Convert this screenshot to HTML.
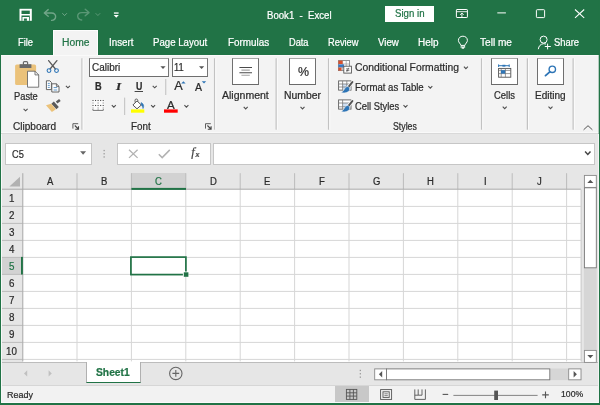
<!DOCTYPE html>
<html lang="en"><head><meta charset="utf-8"><title>Book1 - Excel</title>
<style>
html,body{margin:0;padding:0;background:#fff;}
body{width:600px;height:405px;overflow:hidden;font-family:"Liberation Sans",sans-serif;}
#app{position:relative;width:600px;height:405px;overflow:hidden;background:#e6e6e6;}
#app div,#app svg,#app span{position:absolute;box-sizing:border-box;}
.t{white-space:pre;line-height:1;transform-origin:0 0;display:block;-webkit-text-stroke:0.22px currentColor;}
#titlebar{left:0;top:0;width:600px;height:55px;background:#217346;}
#signin{left:385px;top:6.2px;width:49.2px;height:15.5px;background:#fff;}
#hometab{left:53px;top:30px;width:45px;height:25.5px;background:#f3f3f3;border:1px solid #fdfdfd;border-bottom:none;box-shadow:0 0 1px #17613a;}
#ribbon{left:0;top:55px;width:600px;height:79px;background:#f3f3f3;border-top:1px solid #fafafa;border-bottom:1px solid #d9d9d9;box-shadow:inset 0 -1px 0 #f9f9f9;}
#fbar{left:0;top:134px;width:600px;height:39px;background:#e6e6e6;}
.box{background:#fff;border:1px solid #c6c6c6;}
.box.big{border-color:#a8a8a8 #707070 #6a6a6a #707070;}
#fontname,#fontsize{border-color:#a0a0a0 #767676 #6e6e6e #6e6e6e;}
.sep{width:1px;background:#c8c8c8;}
#grid{left:22.6px;top:189.4px;width:558.2px;height:172.3px;background:#fff;}
#colhdr{left:0;top:173px;width:581px;height:16.4px;background:#e6e6e6;}
#rowhdr{left:0;top:189.4px;width:22.6px;height:172.3px;background:#e6e6e6;}
#colsel{left:131.4px;top:173px;width:54.4px;height:16.6px;background:#d2d2d2;}
#rowsel{left:0;top:257.4px;width:22.8px;height:17px;background:#d2d2d2;}
#tabbar{left:0;top:362px;width:600px;height:24px;background:#e6e6e6;border-top:1px solid #bcbcbc;border-bottom:1px solid #d6d6d6;}
#sheettab{left:85.7px;top:361.6px;width:55.4px;height:21.2px;background:#fff;border-left:1px solid #b0b0b0;border-right:1px solid #b0b0b0;border-bottom:1.9px solid #217346;}
#status{left:0;top:386px;width:600px;height:19px;background:#f2f2f2;}
#viewsel{left:335.2px;top:386px;width:33.8px;height:17.2px;background:#c8c8c8;}
#frame{left:0;top:0;width:600px;height:405px;border-left:1px solid #217346;border-right:1.25px solid #217346;border-bottom:2px solid #217346;pointer-events:none;}
#inner{left:1px;top:134px;width:597.6px;height:269px;border-left:1px solid #f8f8f8;border-right:1px solid #f4f4f4;border-bottom:1px solid #fafafa;pointer-events:none;}
#labels{left:0;top:0;width:600px;height:405px;will-change:transform;}

</style></head>
<body>
<div id="app">
<div id="titlebar"></div>
<div id="signin"></div>
<div id="hometab"></div>
<div id="ribbon"></div>
<div id="fbar"></div>

<!-- ribbon boxes -->
<div class="box" id="fontname" style="left:88.8px;top:58.2px;width:80.6px;height:18.8px;"></div>
<div class="box" id="fontsize" style="left:172px;top:58.2px;width:36.2px;height:18.8px;"></div>
<div class="box big" style="left:232px;top:58.2px;width:27.3px;height:26.5px;"></div>
<div class="box big" style="left:289px;top:58.2px;width:27.3px;height:26.5px;"></div>
<div class="box big" style="left:491.2px;top:58.2px;width:27.3px;height:26.5px;"></div>
<div class="box big" style="left:536.8px;top:58.2px;width:27.6px;height:26.5px;"></div>

<!-- formula bar -->
<div class="box" id="namebox" style="left:5px;top:143px;width:87px;height:22px;"></div>
<div class="box" id="fxbtns" style="left:117px;top:143px;width:94px;height:22px;"></div>
<div class="box" id="finput" style="left:213px;top:143px;width:382px;height:22px;"></div>

<!-- grid -->
<div id="grid"></div>
<div id="colhdr"></div>
<div id="rowhdr"></div>
<div id="colsel"></div>
<div id="rowsel"></div>

<!-- bottom -->
<div id="tabbar"></div>
<div id="sheettab"></div>
<div id="status"></div>
<div id="viewsel"></div>

<svg id="ov" width="600" height="405" viewBox="0 0 600 405" style="left:0;top:0;">
<rect x="22.6" y="205.90" width="558.4" height="1" fill="#d6d6d6"/>
<rect x="1" y="205.90" width="21.6" height="1" fill="#bcbcbc"/>
<rect x="22.6" y="222.90" width="558.4" height="1" fill="#d6d6d6"/>
<rect x="1" y="222.90" width="21.6" height="1" fill="#bcbcbc"/>
<rect x="22.6" y="239.90" width="558.4" height="1" fill="#d6d6d6"/>
<rect x="1" y="239.90" width="21.6" height="1" fill="#bcbcbc"/>
<rect x="22.6" y="256.90" width="558.4" height="1" fill="#d6d6d6"/>
<rect x="1" y="256.90" width="21.6" height="1" fill="#bcbcbc"/>
<rect x="22.6" y="273.90" width="558.4" height="1" fill="#d6d6d6"/>
<rect x="1" y="273.90" width="21.6" height="1" fill="#bcbcbc"/>
<rect x="22.6" y="290.90" width="558.4" height="1" fill="#d6d6d6"/>
<rect x="1" y="290.90" width="21.6" height="1" fill="#bcbcbc"/>
<rect x="22.6" y="307.90" width="558.4" height="1" fill="#d6d6d6"/>
<rect x="1" y="307.90" width="21.6" height="1" fill="#bcbcbc"/>
<rect x="22.6" y="324.90" width="558.4" height="1" fill="#d6d6d6"/>
<rect x="1" y="324.90" width="21.6" height="1" fill="#bcbcbc"/>
<rect x="22.6" y="341.90" width="558.4" height="1" fill="#d6d6d6"/>
<rect x="1" y="341.90" width="21.6" height="1" fill="#bcbcbc"/>
<rect x="22.6" y="358.90" width="558.4" height="1" fill="#d6d6d6"/>
<rect x="1" y="358.90" width="21.6" height="1" fill="#bcbcbc"/>
<rect x="76.50" y="189.4" width="1" height="172" fill="#d6d6d6"/>
<rect x="76.50" y="173.2" width="1" height="16" fill="#bcbcbc"/>
<rect x="130.90" y="189.4" width="1" height="172" fill="#d6d6d6"/>
<rect x="130.90" y="173.2" width="1" height="16" fill="#bcbcbc"/>
<rect x="185.30" y="189.4" width="1" height="172" fill="#d6d6d6"/>
<rect x="185.30" y="173.2" width="1" height="16" fill="#bcbcbc"/>
<rect x="239.70" y="189.4" width="1" height="172" fill="#d6d6d6"/>
<rect x="239.70" y="173.2" width="1" height="16" fill="#bcbcbc"/>
<rect x="294.10" y="189.4" width="1" height="172" fill="#d6d6d6"/>
<rect x="294.10" y="173.2" width="1" height="16" fill="#bcbcbc"/>
<rect x="348.50" y="189.4" width="1" height="172" fill="#d6d6d6"/>
<rect x="348.50" y="173.2" width="1" height="16" fill="#bcbcbc"/>
<rect x="402.90" y="189.4" width="1" height="172" fill="#d6d6d6"/>
<rect x="402.90" y="173.2" width="1" height="16" fill="#bcbcbc"/>
<rect x="457.30" y="189.4" width="1" height="172" fill="#d6d6d6"/>
<rect x="457.30" y="173.2" width="1" height="16" fill="#bcbcbc"/>
<rect x="511.70" y="189.4" width="1" height="172" fill="#d6d6d6"/>
<rect x="511.70" y="173.2" width="1" height="16" fill="#bcbcbc"/>
<rect x="566.10" y="189.4" width="1" height="172" fill="#d6d6d6"/>
<rect x="566.10" y="173.2" width="1" height="16" fill="#bcbcbc"/>
<rect x="22.3" y="173.2" width="1" height="188.2" fill="#a8a8a8"/>
<rect x="1" y="188.7" width="580" height="1" fill="#a8a8a8"/>
<rect x="580.5" y="189.4" width="1.4" height="172" fill="#d2d2d2"/>
<rect x="131.4" y="187.9" width="54.6" height="2" fill="#217346"/>
<rect x="21" y="256.9" width="1.9" height="17.6" fill="#217346"/>
<defs>
<path id="chev" d="M-2,-1 L0,1 L2,-1" fill="none" stroke="#505050" stroke-width="1.1" stroke-linecap="butt" stroke-linejoin="miter"/>
<g id="launcher" fill="none" stroke="#444" stroke-width="0.95">
<path d="M0.5,5.4 L0.5,0.5 L5.8,0.5" stroke="#555"/>
<path d="M2.4,2.3 L5.9,5.8 M6.1,3 L6.1,6 L2.8,6" stroke-width="1.1"/>
</g>
</defs>

<!-- ribbon separators -->
<g id="seps">
<rect x="81.35" y="58.3" width="1.3" height="71.4" fill="#c2c2c2"/><rect x="82.65" y="58.3" width="1" height="71.4" fill="#fbfbfb"/>
<rect x="213.95" y="58.3" width="1.3" height="71.4" fill="#c2c2c2"/><rect x="215.25" y="58.3" width="1" height="71.4" fill="#fbfbfb"/>
<rect x="275.55" y="58.3" width="1.3" height="71.4" fill="#c2c2c2"/><rect x="276.85" y="58.3" width="1" height="71.4" fill="#fbfbfb"/>
<rect x="327.95" y="58.3" width="1.3" height="71.4" fill="#c2c2c2"/><rect x="329.25" y="58.3" width="1" height="71.4" fill="#fbfbfb"/>
<rect x="480.95" y="58.3" width="1.3" height="71.4" fill="#c2c2c2"/><rect x="482.25" y="58.3" width="1" height="71.4" fill="#fbfbfb"/>
<rect x="526.75" y="58.3" width="1.3" height="71.4" fill="#c2c2c2"/><rect x="528.05" y="58.3" width="1" height="71.4" fill="#fbfbfb"/>
<rect x="572.55" y="58.3" width="1.3" height="71.4" fill="#c2c2c2"/><rect x="573.85" y="58.3" width="1" height="71.4" fill="#fbfbfb"/>
<rect x="165.1" y="79" width="1.2" height="16" fill="#c8c8c8"/>
<rect x="124" y="97.6" width="1.2" height="17.4" fill="#c8c8c8"/>
</g>

<!-- title bar: quick access toolbar -->
<g id="qat">
<rect x="19.5" y="8.8" width="12.3" height="12" fill="#fff"/>
<rect x="21.5" y="10.6" width="8.3" height="3.4" fill="#217346"/>
<rect x="21.5" y="15.5" width="8.3" height="5.3" fill="#217346"/>
<rect x="22.4" y="17" width="6.6" height="3.8" fill="#fff"/>
<rect x="23.9" y="18.5" width="3" height="2.3" fill="#217346"/>
<g fill="none" stroke="#ffffff" stroke-opacity="0.36" stroke-width="1.4" stroke-linecap="round" stroke-linejoin="round">
<path d="M48.2,9.6 L44.3,13 L48.2,16.2 M44.6,13 L51.5,13 C54.5,13 55.8,15 55.6,16.8 C55.4,18.8 53.8,20.2 51.6,20.4"/>
<path d="M62.6,13.5 L64.6,15.5 L66.6,13.5" stroke-width="1"/>
</g>
<g fill="none" stroke="#ffffff" stroke-opacity="0.26" stroke-width="1.4" stroke-linecap="round" stroke-linejoin="round">
<path d="M85.2,9.2 L89,12.6 L85.2,15.8 M88.6,12.6 L81.8,12.6 C78.8,12.6 77.5,14.6 77.7,16.4 C77.9,18.4 79.5,19.8 81.7,20"/>
<path d="M95.9,13.5 L97.9,15.5 L99.9,13.5" stroke-width="1"/>
</g>
<rect x="113.9" y="12.4" width="4.7" height="1.3" fill="#fff"/>
<path d="M113.7,14.9 L118.8,14.9 L116.25,17.7 Z" fill="#fff"/>
</g>

<!-- title bar: window controls -->
<g id="winctl" fill="none" stroke="#fff" stroke-width="1">
<rect x="456.4" y="9.5" width="11" height="8" rx="0.6" fill="#1c663c"/>
<path d="M456.4,11.7 L467.4,11.7" stroke-width="0.9"/>
<path d="M461.9,17.4 L461.9,13.2 M460.1,14.9 L461.9,13 L463.7,14.9" stroke-width="0.9"/>
<path d="M497.3,12.9 L505.9,12.9"/>
<rect x="536.4" y="9.7" width="8.2" height="7.9" rx="0.8"/>
<path d="M575,9.5 L584.2,17.8 M584.2,9.5 L575,17.8" stroke-width="1.05"/>
</g>

<!-- tell me bulb + share -->
<g id="tellme" fill="none" stroke="#fff" stroke-width="1">
<path d="M460.9,45.4 C460.6,43.6 458.4,42.6 458.4,40.4 C458.4,37.9 460.3,36.2 462.9,36.2 C465.5,36.2 467.4,37.9 467.4,40.4 C467.4,42.6 465.2,43.6 464.9,45.4 Z"/>
<path d="M461.2,45.6 L461.2,47.6 C461.2,48.6 464.6,48.6 464.6,47.6 L464.6,45.6" stroke-width="0.9"/>
<path d="M461.8,47.2 L464,47.2" stroke-width="1.4"/>
</g>
<g id="share" fill="none" stroke="#fff" stroke-width="1">
<circle cx="543.6" cy="39.6" r="3.5"/>
<path d="M538.3,49.2 C538.6,46 540.8,43.9 543.6,43.7 L546,44"/>
<path d="M547.6,43.6 L547.6,49.4 M544.8,46.5 L550.8,46.5"/>
</g>

<!-- Clipboard group -->
<g id="paste">
<rect x="15.1" y="64.4" width="21" height="20.6" rx="1.6" fill="#ebc27a"/>
<rect x="23.4" y="61.6" width="4.2" height="3.4" rx="1" fill="none" stroke="#6a6a6a" stroke-width="1.2"/>
<rect x="19.6" y="64.2" width="11.8" height="3.8" fill="#6a6a6a"/>
<path d="M27.5,71.2 L35,71.2 L38.7,74.9 L38.7,87.2 L27.5,87.2 Z" fill="#fff" stroke="#6a6a6a" stroke-width="0.9"/>
<path d="M35,71.2 L35,74.9 L38.7,74.9" fill="none" stroke="#6a6a6a" stroke-width="0.9"/>
</g>
<use href="#chev" x="25.6" y="109.8"/>
<g id="cut">
<path d="M48.6,60.6 L55.4,69 M56.9,60.6 L50.1,69" stroke="#5a5a5a" stroke-width="1.3" fill="none" stroke-linecap="round"/>
<circle cx="49" cy="70.6" r="1.9" fill="none" stroke="#2e75b6" stroke-width="1.1"/>
<circle cx="56.5" cy="70.6" r="1.9" fill="none" stroke="#2e75b6" stroke-width="1.1"/>
</g>
<g id="copy">
<path d="M46.4,80.8 L49.8,80.8 L51.4,82.4 L51.4,89.6 L46.4,89.6 Z" fill="#fff" stroke="#555" stroke-width="0.9"/>
<path d="M51.8,83.8 L56.4,83.8 L59,86.4 L59,92 L51.8,92 Z" fill="#fff" stroke="#555" stroke-width="0.9"/>
<path d="M56.4,83.8 L56.4,86.4 L59,86.4" fill="none" stroke="#555" stroke-width="0.8"/>
<path d="M47.8,83.4 L49.8,83.4 M47.8,85.4 L49.8,85.4 M47.8,87.4 L49.8,87.4 M53.6,87.6 L57.2,87.6 M53.6,90 L57.2,90" stroke="#2e75b6" stroke-width="0.75"/>
</g>
<use href="#chev" x="67.9" y="86.8"/>
<g id="painter">
<path d="M56.6,102.5 L59.9,99.9" stroke="#5a5a5a" stroke-width="2.5" stroke-linecap="butt"/>
<path d="M52.6,102.6 L57.6,108.2" stroke="#5a5a5a" stroke-width="3.3" stroke-linecap="butt"/>
<path d="M51.2,103.8 L46,105.3 L51.9,112 L55.9,109.2 Z" fill="#ebc27a"/>
</g>
<use href="#launcher" x="72.4" y="123.2"/>

<!-- Font group -->
<path d="M160.4,66.2 L165.6,66.2 L163,68.9 Z" fill="#555"/>
<path d="M199,66.2 L204.2,66.2 L201.6,68.9 Z" fill="#555"/>
<rect x="134.6" y="91.1" width="8.4" height="0.9" fill="#333"/>
<use href="#chev" x="154.7" y="86.8"/>
<path d="M181.2,83.6 L183.4,81.3 L185.6,83.6 Z" fill="#2e75b6"/>
<path d="M201.8,81.3 L206.2,81.3 L204,83.6 Z" fill="#2e75b6"/>
<g id="borders">
<rect x="92.2" y="99.5" width="12" height="12" fill="#fcfcfc"/>
<g fill="#4a4a4a"><rect x="92.45" y="99.95" width="1.1" height="1.1"/><rect x="95.00" y="99.95" width="1.1" height="1.1"/><rect x="97.55" y="99.95" width="1.1" height="1.1"/><rect x="100.10" y="99.95" width="1.1" height="1.1"/><rect x="102.65" y="99.95" width="1.1" height="1.1"/><rect x="92.45" y="104.95" width="1.1" height="1.1"/><rect x="95.00" y="104.95" width="1.1" height="1.1"/><rect x="97.55" y="104.95" width="1.1" height="1.1"/><rect x="100.10" y="104.95" width="1.1" height="1.1"/><rect x="102.65" y="104.95" width="1.1" height="1.1"/><rect x="92.45" y="102.45" width="1.1" height="1.1" fill-opacity="0.6"/><rect x="97.55" y="102.45" width="1.1" height="1.1" fill-opacity="0.6"/><rect x="102.65" y="102.45" width="1.1" height="1.1" fill-opacity="0.6"/><rect x="92.45" y="107.45" width="1.1" height="1.1" fill-opacity="0.6"/><rect x="97.55" y="107.45" width="1.1" height="1.1" fill-opacity="0.6"/><rect x="102.65" y="107.45" width="1.1" height="1.1" fill-opacity="0.6"/></g>
<path d="M92.9,109 L92.9,110.4 L103.3,110.4 L103.3,109 M98.1,109.4 L98.1,110.4" stroke="#777" stroke-width="1" fill="none"/>
</g>
<use href="#chev" x="113.8" y="106.2"/>
<g id="fill">
<path d="M132.9,105 L137,100.9 L141.3,105 L137,108.8 Z" fill="#fff" stroke="#555" stroke-width="1" stroke-linejoin="round"/>
<path d="M135.2,102.6 L135,100.2 C135,98.6 137.6,98.6 137.8,100.2 L137.9,101.6" fill="none" stroke="#555" stroke-width="0.9"/>
<path d="M141.2,102.6 C143.4,103.6 144.4,106 143,108.6 C142.8,106.8 142.2,105.8 141.2,105 Z" fill="#2e75b6" stroke="#2e75b6" stroke-width="0.6"/>
<rect x="131" y="109.4" width="13.3" height="3.3" fill="#ffff00"/>
</g>
<use href="#chev" x="153.1" y="106.2"/>
<rect x="164" y="109.4" width="13.7" height="3.3" fill="#ff0000"/>
<use href="#chev" x="186.4" y="106.2"/>
<use href="#launcher" x="205" y="123.2"/>

<!-- Alignment / Number -->
<g id="alignicon" stroke-width="1.1">
<path d="M239.4,67.5 L252,67.5 M239.4,72.7 L252,72.7" stroke="#4a4a4a"/>
<path d="M241.4,70.1 L249.8,70.1 M241.4,75.3 L249.8,75.3" stroke="#a4a4a4"/>
</g>
<use href="#chev" x="245.7" y="107.9"/>
<use href="#chev" x="302.5" y="107.9"/>

<!-- Styles group -->
<g id="condfmt">
<rect x="338.4" y="60.6" width="11.2" height="10" fill="#fff" stroke="#7a7a7a" stroke-width="0.8"/>
<path d="M342.6,60.6 L342.6,70.6 M346.2,60.6 L346.2,70.6 M338.4,64 L349.6,64 M338.4,67.4 L349.6,67.4" stroke="#9a9a9a" stroke-width="0.7" fill="none"/>
<rect x="338.4" y="60.6" width="4.2" height="3.4" fill="#d8502d"/>
<rect x="338.4" y="64.4" width="5.6" height="2.8" fill="#3b78c2"/>
<rect x="338.4" y="67.6" width="3.2" height="3" fill="#d8502d"/>
<rect x="343.8" y="66.2" width="7.6" height="6.9" fill="#fff" stroke="#555" stroke-width="0.9"/>
<path d="M346,68.9 L349.4,68.9 M346,70.6 L349.4,70.6 M348.6,67.8 L346.8,71.8" stroke="#444" stroke-width="0.7" fill="none"/>
</g>
<use href="#chev" x="465.9" y="67.6"/>
<g id="fmttable">
<rect x="338.6" y="80.9" width="12.4" height="9.2" fill="#fff" stroke="#5e5e5e" stroke-width="0.9"/>
<rect x="342.6" y="84" width="8" height="5.8" fill="#cfe0f3"/>
<path d="M342.6,80.9 L342.6,90.1 M346.8,80.9 L346.8,90.1 M338.6,84 L351,84 M338.6,87 L351,87" stroke="#7a7a7a" stroke-width="0.8" fill="none"/>
<path d="M352.6,81.8 L348.4,87" stroke="#f3f3f3" stroke-width="3.6" stroke-linecap="round"/>
<path d="M352.4,82 L348.8,86.6" stroke="#555" stroke-width="2" stroke-linecap="round"/>
<path d="M348.2,86.6 C350.2,87.6 350.2,90.2 348.4,91.6 C346.4,93.2 343.2,93 341,92.6 C343,91.8 343.6,90.4 344.6,88.8 C345.6,87.2 347,86.2 348.2,86.6 Z" fill="#2e75b6" stroke="#f3f3f3" stroke-width="0.5"/>
</g>
<use href="#chev" x="430.3" y="87.2"/>
<g id="cellstyles">
<rect x="338.6" y="99.9" width="12.4" height="9.2" fill="#fff" stroke="#5e5e5e" stroke-width="0.9"/>
<rect x="342.6" y="103" width="8" height="3.8" fill="#cfe0f3"/>
<path d="M342.6,99.9 L342.6,109.1 M338.6,103 L351,103 M338.6,106.8 L351,106.8" stroke="#7a7a7a" stroke-width="0.8" fill="none"/>
<path d="M352.6,100.8 L348.4,106" stroke="#f3f3f3" stroke-width="3.6" stroke-linecap="round"/>
<path d="M352.4,101 L348.8,105.6" stroke="#555" stroke-width="2" stroke-linecap="round"/>
<path d="M348.2,105.6 C350.2,106.6 350.2,109.2 348.4,110.6 C346.4,112.2 343.2,112 341,111.6 C343,110.8 343.6,109.4 344.6,107.8 C345.6,106.2 347,105.2 348.2,105.6 Z" fill="#2e75b6" stroke="#f3f3f3" stroke-width="0.5"/>
</g>
<use href="#chev" x="405.5" y="106.2"/>

<!-- Cells / Editing -->
<g id="cellsicon">
<path d="M498.6,64.4 L498.6,67 M509.2,64.4 L509.2,67 M498.6,65.7 L509.2,65.7" stroke="#2e75b6" stroke-width="1" fill="none"/>
<rect x="502.4" y="64.8" width="3" height="1.8" fill="#2e75b6"/>
<rect x="498.6" y="68.4" width="12.2" height="8.8" fill="#fff" stroke="#505050" stroke-width="0.9"/>
<path d="M501.2,68.4 L501.2,77.2 M505.4,68.4 L505.4,77.2 M498.6,70.4 L510.8,70.4 M498.6,73.6 L510.8,73.6" stroke="#707070" stroke-width="0.7" fill="none"/>
<rect x="501" y="70.2" width="4.2" height="3.4" fill="#2e75b6"/>
</g>
<use href="#chev" x="504.7" y="107.7"/>
<g id="findicon" fill="none" stroke="#2e75b6">
<circle cx="552.3" cy="69.3" r="3.2" stroke-width="1.4"/>
<path d="M549.8,71.9 L545.5,75.6" stroke-width="1.9" stroke-linecap="round"/>
</g>
<use href="#chev" x="550.5" y="107.7"/>
<path d="M583.6,129.8 L588,125.7 L592.4,129.8" fill="none" stroke="#555" stroke-width="1"/>

<!-- formula bar -->
<path d="M80.1,151.3 L86.1,151.3 L83.1,154.8 Z" fill="#666"/>
<g fill="#9a9a9a"><rect x="103.5" y="149.9" width="1.3" height="1.3"/><rect x="103.5" y="153.1" width="1.3" height="1.3"/><rect x="103.5" y="156.3" width="1.3" height="1.3"/></g>
<path d="M129,149.8 L137.6,157.9 M137.6,149.8 L129,157.9" stroke="#b2b2b2" stroke-width="1.3" fill="none"/>
<path d="M158.8,154.2 L162.2,157.6 L169.8,149.9" stroke="#b2b2b2" stroke-width="1.5" fill="none"/>
<path d="M585.1,151.5 L587.8,154.4 L590.5,151.5" fill="none" stroke="#444" stroke-width="1.5"/>

<!-- select all triangle -->
<path d="M20,176.8 L20,186.6 L9.4,186.6 Z" fill="#b2b2b2"/>

<!-- selected cell -->
<rect x="130.9" y="257.1" width="55" height="17.5" fill="none" stroke="#217346" stroke-width="1.7"/>
<rect x="182.9" y="271.5" width="5.6" height="5.4" fill="#fff"/>
<rect x="183.8" y="272.3" width="4.6" height="4.5" fill="#217346"/>

<!-- vertical scrollbar -->
<g id="vscroll">
<rect x="583.9" y="175.2" width="12.8" height="187.4" fill="#d6d6d6"/>
<rect x="584.4" y="175.4" width="11.9" height="12" fill="#fff" stroke="#8a8a8a" stroke-width="0.9"/>
<path d="M587.3,183 L590.35,179.7 L593.4,183 Z" fill="#555"/>
<rect x="584.4" y="187.8" width="11.9" height="80" fill="#fff" stroke="#777" stroke-width="0.9"/>
<rect x="584.4" y="350.4" width="11.9" height="12" fill="#fff" stroke="#8a8a8a" stroke-width="0.9"/>
<path d="M587.3,354.9 L593.4,354.9 L590.35,358.2 Z" fill="#555"/>
</g>

<!-- sheet nav + add -->
<path d="M27.2,370.2 L24,373.4 L27.2,376.6 Z" fill="#c0c0c0"/>
<path d="M48.6,370.2 L51.8,373.4 L48.6,376.6 Z" fill="#c0c0c0"/>
<g fill="none" stroke="#666" stroke-width="1.1">
<circle cx="175.8" cy="373.4" r="6.2"/>
<path d="M172.4,373.4 L179.2,373.4 M175.8,370 L175.8,376.8"/>
</g>

<!-- horizontal scrollbar -->
<g fill="#9a9a9a"><rect x="359.7" y="369.8" width="1.3" height="1.3"/><rect x="359.7" y="373.1" width="1.3" height="1.3"/><rect x="359.7" y="376.5" width="1.3" height="1.3"/></g>
<g id="hscroll">
<rect x="374.3" y="368.5" width="207" height="11.6" fill="#d6d6d6"/>
<rect x="374.7" y="368.9" width="11.8" height="10.9" fill="#fff" stroke="#8a8a8a" stroke-width="0.9"/>
<path d="M382.2,371 L378.9,374.3 L382.2,377.6 Z" fill="#555"/>
<rect x="386.5" y="368.9" width="163.3" height="10.9" fill="#fff" stroke="#777" stroke-width="0.9"/>
<rect x="568.7" y="368.9" width="12.3" height="10.9" fill="#fff" stroke="#8a8a8a" stroke-width="0.9"/>
<path d="M573.6,371 L576.9,374.3 L573.6,377.6 Z" fill="#555"/>
</g>

<!-- status bar view buttons -->
<g id="views" fill="none" stroke="#555" stroke-width="0.9">
<rect x="346.4" y="389.4" width="10.4" height="10"/>
<path d="M349.9,389.4 L349.9,399.4 M353.4,389.4 L353.4,399.4 M346.4,392.8 L356.8,392.8 M346.4,396.1 L356.8,396.1"/>
<rect x="380.6" y="389.6" width="11" height="9.8"/>
<rect x="383" y="391.8" width="6.2" height="5.6"/>
<path d="M384.4,393.8 L387.8,393.8 M384.4,395.6 L387.8,395.6" stroke-width="0.7"/>
<path d="M414.8,389.4 L414.8,399.4 L425.4,399.4 L425.4,389.4"/>
<path d="M418.2,389.4 L418.2,395.2 L422,395.2 L422,389.4 M414.8,395.2 L418.2,395.2"/>
</g>
<!-- zoom slider -->
<g id="zoom" stroke="#555" fill="none">
<path d="M442.6,394.4 L448.2,394.4" stroke-width="1.1"/>
<path d="M453.4,395.4 L537.6,395.4" stroke-width="0.9" stroke="#777"/>
<rect x="494.2" y="390.6" width="3.8" height="9.4" fill="#555" stroke="none"/>
<path d="M542.2,394.9 L548.8,394.9 M545.5,391.6 L545.5,398.2" stroke-width="1.1"/>
</g>

<rect id="rborder" x="598.7" y="0" width="1.3" height="405" fill="#217346"/>

</svg>
<div id="inner"></div>
<div id="frame"></div>

<div id="labels">
<span class="t" id="t0" style="left:267.30px;top:10.54px;font-size:10px;color:#ffffff;transform:scaleX(0.9604)">Book1  -  Excel</span>
<span class="t" id="t1" style="left:394.50px;top:9.28px;font-size:10.3px;color:#217346;transform:scaleX(0.9370)">Sign in</span>
<span class="t" id="t2" style="left:18.30px;top:37.53px;font-size:10px;color:#ffffff;transform:scaleX(0.9302)">File</span>
<span class="t" id="t3" style="left:61.70px;top:37.53px;font-size:10px;color:#217346;transform:scaleX(1.0304)">Home</span>
<span class="t" id="t4" style="left:108.80px;top:37.53px;font-size:10px;color:#ffffff;transform:scaleX(0.9794)">Insert</span>
<span class="t" id="t5" style="left:153.30px;top:37.53px;font-size:10px;color:#ffffff;transform:scaleX(0.9649)">Page Layout</span>
<span class="t" id="t6" style="left:228.00px;top:37.53px;font-size:10px;color:#ffffff;transform:scaleX(0.9883)">Formulas</span>
<span class="t" id="t7" style="left:288.50px;top:37.53px;font-size:10px;color:#ffffff;transform:scaleX(0.9231)">Data</span>
<span class="t" id="t8" style="left:327.80px;top:37.53px;font-size:10px;color:#ffffff;transform:scaleX(0.9300)">Review</span>
<span class="t" id="t9" style="left:377.50px;top:37.53px;font-size:10px;color:#ffffff;transform:scaleX(0.9674)">View</span>
<span class="t" id="t10" style="left:417.80px;top:37.53px;font-size:10px;color:#ffffff;transform:scaleX(0.9962)">Help</span>
<span class="t" id="t11" style="left:479.80px;top:37.53px;font-size:10px;color:#ffffff;transform:scaleX(1.0099)">Tell me</span>
<span class="t" id="t12" style="left:554.00px;top:37.53px;font-size:10px;color:#ffffff;transform:scaleX(0.9368)">Share</span>
<span class="t" id="t13" style="left:13.80px;top:91.53px;font-size:10px;color:#2b2b2b;transform:scaleX(0.9305)">Paste</span>
<span class="t" id="t14" style="left:13.00px;top:121.53px;font-size:10px;color:#2b2b2b;transform:scaleX(1.0044)">Clipboard</span>
<span class="t" id="t15" style="left:92.20px;top:62.53px;font-size:10px;color:#2b2b2b;transform:scaleX(0.9949)">Calibri</span>
<span class="t" id="t16" style="left:174.30px;top:62.53px;font-size:10px;color:#2b2b2b;transform:scaleX(0.9335)">11</span>
<span class="t" id="t17" style="left:94.67px;top:81.53px;font-size:10px;color:#2b2b2b;font-weight:bold;transform:scaleX(0.9200)">B</span>
<span class="t" id="t18" style="left:115.63px;top:80.69px;font-size:11px;color:#2b2b2b;font-weight:bold;font-style:italic;font-family:'Liberation Serif',serif;transform:scaleX(1.2000)">I</span>
<span class="t" id="t19" style="left:135.62px;top:81.53px;font-size:10px;color:#2b2b2b;font-weight:bold;transform:scaleX(0.8800)">U</span>
<span class="t" id="t20" style="left:174.37px;top:80.25px;font-size:12.7px;color:#2b2b2b;transform:scaleX(1.0000)">A</span>
<span class="t" id="t21" style="left:195.30px;top:82.53px;font-size:10px;color:#2b2b2b;transform:scaleX(1.0500)">A</span>
<span class="t" id="t22" style="left:167.24px;top:99.69px;font-size:11px;color:#2b2b2b;transform:scaleX(1.0500)">A</span>
<span class="t" id="t23" style="left:131.30px;top:121.53px;font-size:10px;color:#2b2b2b;transform:scaleX(0.9842)">Font</span>
<span class="t" id="t24" style="left:222.20px;top:90.53px;font-size:10px;color:#2b2b2b;transform:scaleX(1.0524)">Alignment</span>
<span class="t" id="t25" style="left:297.67px;top:64.57px;font-size:13.5px;color:#2b2b2b;transform:scaleX(0.9200)">%</span>
<span class="t" id="t26" style="left:284.20px;top:90.53px;font-size:10px;color:#2b2b2b;transform:scaleX(1.0400)">Number</span>
<span class="t" id="t27" style="left:355.00px;top:62.53px;font-size:10px;color:#2b2b2b;transform:scaleX(1.0337)">Conditional Formatting</span>
<span class="t" id="t28" style="left:355.00px;top:82.53px;font-size:10px;color:#2b2b2b;transform:scaleX(0.9606)">Format as Table</span>
<span class="t" id="t29" style="left:355.00px;top:101.53px;font-size:10px;color:#2b2b2b;transform:scaleX(0.9354)">Cell Styles</span>
<span class="t" id="t30" style="left:392.90px;top:121.53px;font-size:10px;color:#2b2b2b;transform:scaleX(0.8739)">Styles</span>
<span class="t" id="t31" style="left:494.00px;top:90.53px;font-size:10px;color:#2b2b2b;transform:scaleX(0.9445)">Cells</span>
<span class="t" id="t32" style="left:535.00px;top:90.53px;font-size:10px;color:#2b2b2b;transform:scaleX(1.0007)">Editing</span>
<span class="t" id="t33" style="left:11.60px;top:149.53px;font-size:10px;color:#2b2b2b;transform:scaleX(0.9221)">C5</span>
<span class="t" id="t34" style="left:96.30px;top:368.14px;font-size:10px;color:#217346;font-weight:bold;transform:scaleX(1.0275)">Sheet1</span>
<span class="t" id="t35" style="left:7.20px;top:391.13px;font-size:9.3px;color:#2b2b2b;transform:scaleX(0.9674)">Ready</span>
<span class="t" id="t36" style="left:560.80px;top:390.21px;font-size:9.2px;color:#2b2b2b;transform:scaleX(0.9447)">100%</span>
<span class="t" id="t37" style="left:46.63px;top:176.53px;font-size:10px;color:#2b2b2b;transform:scaleX(0.9500)">A</span>
<span class="t" id="t38" style="left:101.03px;top:176.53px;font-size:10px;color:#2b2b2b;transform:scaleX(0.9500)">B</span>
<span class="t" id="t39" style="left:155.16px;top:176.53px;font-size:10px;color:#217346;transform:scaleX(0.9500)">C</span>
<span class="t" id="t40" style="left:209.56px;top:176.53px;font-size:10px;color:#2b2b2b;transform:scaleX(0.9500)">D</span>
<span class="t" id="t41" style="left:264.23px;top:176.53px;font-size:10px;color:#2b2b2b;transform:scaleX(0.9500)">E</span>
<span class="t" id="t42" style="left:318.90px;top:176.53px;font-size:10px;color:#2b2b2b;transform:scaleX(0.9500)">F</span>
<span class="t" id="t43" style="left:372.50px;top:176.53px;font-size:10px;color:#2b2b2b;transform:scaleX(0.9500)">G</span>
<span class="t" id="t44" style="left:427.16px;top:176.53px;font-size:10px;color:#2b2b2b;transform:scaleX(0.9500)">H</span>
<span class="t" id="t45" style="left:483.68px;top:176.53px;font-size:10px;color:#2b2b2b;transform:scaleX(0.9500)">I</span>
<span class="t" id="t46" style="left:537.02px;top:176.53px;font-size:10px;color:#2b2b2b;transform:scaleX(0.9500)">J</span>
<span class="t" id="t47" style="left:8.78px;top:194.28px;font-size:10.3px;color:#2b2b2b;transform:scaleX(0.9500)">1</span>
<span class="t" id="t48" style="left:8.78px;top:211.28px;font-size:10.3px;color:#2b2b2b;transform:scaleX(0.9500)">2</span>
<span class="t" id="t49" style="left:8.78px;top:228.28px;font-size:10.3px;color:#2b2b2b;transform:scaleX(0.9500)">3</span>
<span class="t" id="t50" style="left:8.78px;top:245.28px;font-size:10.3px;color:#2b2b2b;transform:scaleX(0.9500)">4</span>
<span class="t" id="t51" style="left:8.78px;top:262.28px;font-size:10.3px;color:#217346;transform:scaleX(0.9500)">5</span>
<span class="t" id="t52" style="left:8.78px;top:279.28px;font-size:10.3px;color:#2b2b2b;transform:scaleX(0.9500)">6</span>
<span class="t" id="t53" style="left:8.78px;top:296.28px;font-size:10.3px;color:#2b2b2b;transform:scaleX(0.9500)">7</span>
<span class="t" id="t54" style="left:8.78px;top:313.28px;font-size:10.3px;color:#2b2b2b;transform:scaleX(0.9500)">8</span>
<span class="t" id="t55" style="left:8.78px;top:330.28px;font-size:10.3px;color:#2b2b2b;transform:scaleX(0.9500)">9</span>
<span class="t" id="t56" style="left:6.05px;top:347.28px;font-size:10.3px;color:#2b2b2b;transform:scaleX(0.9500)">10</span>
<span class="t" id="t57" style="left:191.26px;top:145.82px;font-size:12.5px;color:#444;font-style:italic;font-family:'Liberation Serif',serif;transform:scaleX(1.0000)">f</span>
<span class="t" id="t58" style="left:195.40px;top:150.83px;font-size:8px;color:#444;font-weight:bold;font-style:italic;font-family:'Liberation Serif',serif;transform:scaleX(1.0000)">x</span>
</div>
</div>
</body></html>
